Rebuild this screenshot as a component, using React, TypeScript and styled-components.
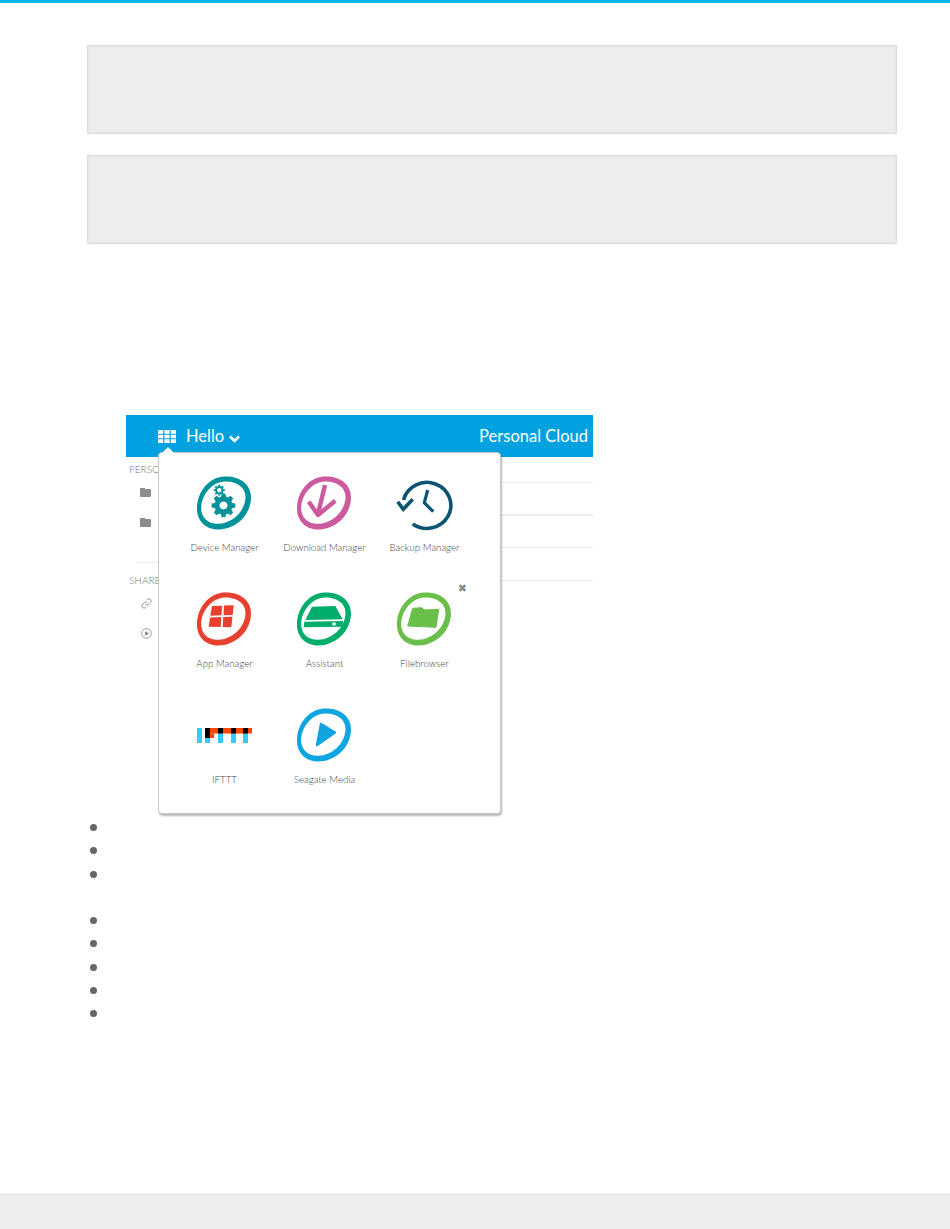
import * as React from 'react';
import styled, { createGlobalStyle } from 'styled-components';

const GlobalStyle = createGlobalStyle`
  html, body {
    margin: 0;
    padding: 0;
    background: #fff;
    font-family: Lato, "Liberation Sans", sans-serif;
  }
`;

const gearPath = (cx: number, cy: number, outer: number, inner: number, teeth: number) => {
  const pts: string[] = [];
  const step = (Math.PI * 2) / teeth;
  for (let i = 0; i < teeth; i++) {
    const a = i * step;
    [
      [a - step * 0.36, inner],
      [a - step * 0.2, outer],
      [a + step * 0.2, outer],
      [a + step * 0.36, inner],
    ].forEach(([t, r]) => {
      pts.push(`${(cx + Math.cos(t) * r).toFixed(2)} ${(cy + Math.sin(t) * r).toFixed(2)}`);
    });
  }
  return `M${pts.join('L')}Z`;
};

const Ring: React.FC<{ color: string }> = ({ color }) => (
  <g fill={color}>
    <path
      fillRule="evenodd"
      d="M30 3.5C45 2.5 57.5 11 57 25C56.5 43 41 56.5 24 56.5C11 56.5 2.5 47 3 35C3.5 18 15 4.5 30 3.5Z
         M30.5 8.5C18.5 9 8 21 7.2 34C6.7 44.5 14 51.3 24.5 50.8C37.5 50.3 50.5 39.5 51.5 25C52.3 14.5 42.5 8 30.5 8.5Z"
    />
  </g>
);

const Shot = styled.svg`
  display: block;
  width: 60px;
  height: 60px;
`;

const DeviceIcon = () => (
  <Shot viewBox="0 0 60 60">
    <Ring color="#00929b" />
    <path fillRule="evenodd" fill="#00929b" d={`${gearPath(29.5, 32.5, 12, 9, 8)}M29.5 28.5a4 4 0 1 0 .01 0Z`} />
    <path fillRule="evenodd" fill="#00929b" d={`${gearPath(25.3, 17.2, 5.6, 4, 8)}M25.3 15a2.2 2.2 0 1 0 .01 0Z`} />
  </Shot>
);

const DownloadIcon = () => (
  <Shot viewBox="0 0 60 60">
    <Ring color="#cc5a9e" />
    <path d="M31 12L24 41M14.7 28.7L24 42L41.3 27.7" fill="none" stroke="#cc5a9e" strokeWidth="4.4" strokeLinejoin="round" />
  </Shot>
);

const BackupIcon = () => (
  <Shot viewBox="0 0 60 60">
    <g fill="none" stroke="#0b5472" strokeLinejoin="miter">
      <path d="M18.7 51A24 23 0 1 0 9.5 27" strokeWidth="3.6" />
      <path d="M3.7 28.7L9.3 36.3L18.7 26.3" strokeWidth="3.6" />
      <path d="M33.7 17L30.3 29.7L39.3 38.7" strokeWidth="3.2" />
    </g>
  </Shot>
);

const AppIcon = () => (
  <Shot viewBox="0 0 60 60">
    <Ring color="#e8402f" />
    <g fill="#e8402f">
      <polygon points="18,17 28,16.7 27.5,26.3 16.3,26.7" />
      <polygon points="30,16.6 39.7,16.3 38.7,26 29.5,26.3" />
      <polygon points="16,28.5 27.3,28 26.7,38 14.7,37.7" />
      <polygon points="29.2,28 38.5,27.8 37.3,38.3 28.7,38" />
    </g>
  </Shot>
);

const AssistantIcon = () => (
  <Shot viewBox="0 0 60 60">
    <Ring color="#00ad6b" />
    <g fill="#00ad6b">
      <polygon points="18,17.7 41.3,17 48.7,30.3 11.3,31" />
      <polygon points="10.3,32.7 49.3,32 48,37.7 9.7,38.3" />
    </g>
    <circle cx="40" cy="35" r="1.8" fill="#fff" />
  </Shot>
);

const FolderIcon = () => (
  <Shot viewBox="0 0 60 60">
    <Ring color="#6abf4b" />
    <path fill="#6abf4b" stroke="#6abf4b" strokeWidth="1" strokeLinejoin="round" d="M18.7 19.3L28 18.7L30.3 21L44.7 20.3L42 38.3L13.7 37Z" />
  </Shot>
);

const IftttIcon = () => (
  <Shot viewBox="0 0 60 60">
    <g transform="translate(3 23)">
      <rect x="0" y="0" width="5" height="15" fill="#33ccff" />
      <rect x="8" y="10" width="5" height="5" fill="#33ccff" />
      <rect x="21" y="5.5" width="5" height="9.5" fill="#33ccff" />
      <rect x="34" y="5.5" width="5" height="9.5" fill="#33ccff" />
      <rect x="46" y="5.5" width="5" height="9.5" fill="#33ccff" />
      <rect x="8" y="0" width="47" height="5.5" fill="#ff4400" />
      <rect x="13" y="5.5" width="4" height="4.5" fill="#ff4400" />
      <rect x="8" y="0" width="5" height="10" fill="#000" />
      <rect x="21" y="0" width="5" height="5.5" fill="#000" />
      <rect x="34" y="0" width="5" height="5.5" fill="#000" />
      <rect x="46" y="0" width="5" height="5.5" fill="#000" />
    </g>
  </Shot>
);

const MediaIcon = () => (
  <Shot viewBox="0 0 60 60">
    <Ring color="#0ea5e0" />
    <polygon points="27,19 41,27.5 23,40" fill="#0ea5e0" stroke="#0ea5e0" strokeWidth="2.4" strokeLinejoin="round" />
  </Shot>
);

const apps: { name: string; icon: React.ReactNode }[] = [
  { name: 'Device Manager', icon: <DeviceIcon /> },
  { name: 'Download Manager', icon: <DownloadIcon /> },
  { name: 'Backup Manager', icon: <BackupIcon /> },
  { name: 'App Manager', icon: <AppIcon /> },
  { name: 'Assistant', icon: <AssistantIcon /> },
  { name: 'Filebrowser', icon: <FolderIcon /> },
  { name: 'IFTTT', icon: <IftttIcon /> },
  { name: 'Seagate Media', icon: <MediaIcon /> },
];

const bullets = [false, false, true, false, false, false, false, false];

const App: React.FC = () => {
  return (
    <Page>
      <GlobalStyle />
      <TopBar />
      <Content>
        <Note />
        <Note />
        <ScreenShot>
          <Header>
            <HeaderLeft>
              <svg width="18" height="13" viewBox="0 0 18 13">
                <path
                  fill="#fff"
                  d="M0 0h5.2v3.7H0zM6.4 0h5.2v3.7H6.4zM12.8 0H18v3.7h-5.2zM0 4.7h5.2v3.6H0zM6.4 4.7h5.2v3.6H6.4zM12.8 4.7H18v3.6h-5.2zM0 9.3h5.2V13H0zM6.4 9.3h5.2V13H6.4zM12.8 9.3H18V13h-5.2z"
                />
              </svg>
              <Hello>Hello</Hello>
              <Chevron width="11" height="8" viewBox="0 0 11 8">
                <path d="M1 1.5L5.5 6L10 1.5" fill="none" stroke="#fff" strokeWidth="2.6" />
              </Chevron>
            </HeaderLeft>
            <Brand>Personal Cloud</Brand>
          </Header>
          <Body>
            <Sidebar>
              <SectionLabel>PERSONAL</SectionLabel>
              <SideRow>
                <SideFolder />
              </SideRow>
              <SideRow>
                <SideFolder />
              </SideRow>
              <SideDivider />
              <SectionLabel>SHARED</SectionLabel>
              <SideRow $icon>
                <svg width="11" height="11" viewBox="0 0 24 24" fill="none" stroke="#888" strokeWidth="2">
                  <path d="M10 14a5 5 0 0 0 7 0l4-4a5 5 0 0 0-7-7l-1.5 1.5" />
                  <path d="M14 10a5 5 0 0 0-7 0l-4 4a5 5 0 0 0 7 7l1.5-1.5" />
                </svg>
              </SideRow>
              <SideRow $icon>
                <svg width="11" height="11" viewBox="0 0 24 24">
                  <circle cx="12" cy="12" r="10.5" fill="none" stroke="#888" strokeWidth="1.8" />
                  <polygon points="9,7 18,12 9,17" fill="#888" />
                </svg>
              </SideRow>
            </Sidebar>
            <FileList>
              <FileRow $height={25} />
              <FileRow $height={31} $thick />
              <FileRow $height={31} />
              <FileRow $height={32} />
            </FileList>
          </Body>
          <AppMenu>
            <Close>✖</Close>
            {apps.map(app => (
              <AppItem key={app.name}>
                {app.icon}
                <AppName>{app.name}</AppName>
              </AppItem>
            ))}
          </AppMenu>
        </ScreenShot>
        <BulletList>
          {bullets.map((tall, i) => (
            <Bullet key={i} $tall={tall} />
          ))}
        </BulletList>
      </Content>
      <Footer />
    </Page>
  );
};

export default App;

const Page = styled.div`
  width: 950px;
  height: 1229px;
  display: flex;
  flex-direction: column;
  overflow: hidden;
`;

const TopBar = styled.div`
  height: 3px;
  flex: none;
  background: #00b4f5;
`;

const Content = styled.main`
  flex: 1;
  padding: 42px 53px 0 87px;
`;

const Note = styled.div`
  box-sizing: border-box;
  height: 89px;
  margin-bottom: 21px;
  background: #ededed;
  border: 1px solid #dcdcdc;
  box-shadow: inset 0 0 0 1px #e6e6e6;
`;

const ScreenShot = styled.div`
  position: relative;
  width: 467px;
  height: 394px;
  margin: 171px 0 0 39px;
`;

const Header = styled.header`
  height: 42px;
  padding: 0 5px 0 32px;
  display: flex;
  align-items: center;
  justify-content: space-between;
  background: #00a1de;
  color: #fff;
`;

const HeaderLeft = styled.div`
  display: flex;
  align-items: center;
`;

const Hello = styled.span`
  margin: 0 5px 0 10px;
  font-size: 16.5px;
`;

const Chevron = styled.svg`
  margin-top: 6px;
`;

const Brand = styled.span`
  font-size: 16.5px;
`;

const Body = styled.div`
  display: flex;
`;

const Sidebar = styled.div`
  width: 100px;
  flex: none;
  padding-left: 3px;
  box-sizing: border-box;
`;

const SectionLabel = styled.div`
  padding-top: 6px;
  margin-bottom: 2px;
  font-size: 10px;
  font-weight: 300;
  line-height: 12px;
  color: #777;
  white-space: nowrap;
`;

const SideRow = styled.div<{ $icon?: boolean }>`
  height: 30px;
  padding-left: ${p => (p.$icon ? 12 : 11)}px;
  display: flex;
  align-items: center;
`;

const SideDivider = styled.div`
  height: 1px;
  margin: 25px 0 5px 7px;
  background: #eeeeee;
`;

const SideFolder = styled.span`
  position: relative;
  display: block;
  width: 11px;
  height: 8px;
  margin-top: 2px;
  border-radius: 1px;
  background: #8c8c8c;
  &::before {
    content: '';
    position: absolute;
    left: 0;
    top: -1px;
    width: 5px;
    height: 2px;
    background: #8c8c8c;
  }
`;

const FileList = styled.div`
  flex: 1;
`;

const FileRow = styled.div<{ $height: number; $thick?: boolean }>`
  height: ${p => p.$height}px;
  border-bottom: ${p => (p.$thick ? 2 : 1)}px solid #eeeeee;
`;

const AppMenu = styled.div`
  position: absolute;
  left: 32px;
  top: 37px;
  box-sizing: border-box;
  width: 343px;
  height: 362px;
  padding: 20px 0 0 15px;
  display: grid;
  grid-template-columns: repeat(3, 100px);
  grid-auto-rows: 116px;
  background: #fff;
  border: 1px solid #c8c8c8;
  border-radius: 4px;
  box-shadow: 1px 2px 2px rgba(0, 0, 0, 0.28);
  &::before {
    content: '';
    position: absolute;
    left: 3px;
    top: -6px;
    border-left: 6px solid transparent;
    border-right: 6px solid transparent;
    border-bottom: 6px solid #fff;
  }
`;

const AppItem = styled.div`
  display: flex;
  flex-direction: column;
  align-items: center;
`;

const AppName = styled.span`
  margin: 8px 0 0 1px;
  font-size: 9.7px;
  font-weight: 300;
  line-height: 12px;
  color: #444;
  white-space: nowrap;
`;

const Close = styled.span`
  position: absolute;
  right: 33px;
  top: 130px;
  font-family: "DejaVu Sans", sans-serif;
  font-size: 11px;
  line-height: 12px;
  color: #888;
`;

const BulletList = styled.ul`
  list-style: none;
  margin: 15px 0 0;
  padding: 0 0 0 3px;
`;

const Bullet = styled.li<{ $tall: boolean }>`
  height: ${p => (p.$tall ? 46.6 : 23.3)}px;
  &::before {
    content: '';
    display: block;
    width: 7px;
    height: 7px;
    border-radius: 50%;
    background: #666;
  }
`;

const Footer = styled.footer`
  height: 36px;
  flex: none;
  background: #eeeeee;
`;
